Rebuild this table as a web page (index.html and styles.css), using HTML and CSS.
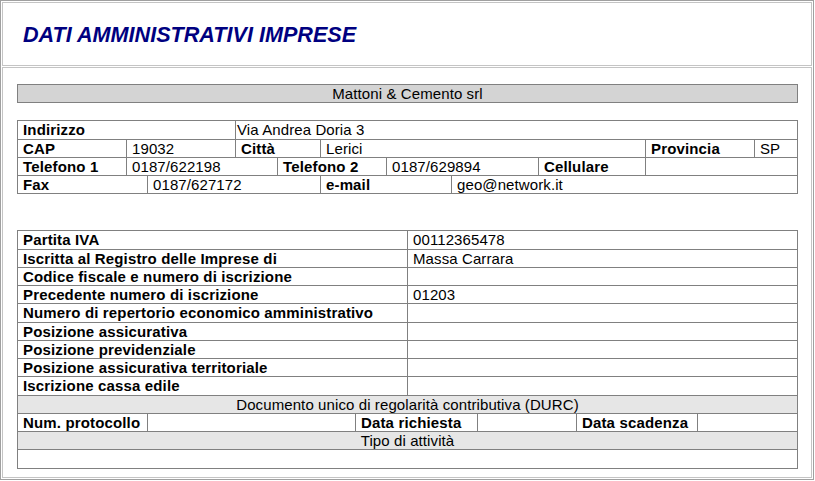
FILE: index.html
```html
<!DOCTYPE html>
<html lang="it">
<head>
<meta charset="utf-8">
<title>Dati amministrativi imprese</title>
<link rel="stylesheet" href="styles.css">
</head>
<body>
<div class="frame">
  <div class="pane pane-top">
    <h1 class="title">DATI AMMINISTRATIVI IMPRESE</h1>
  </div>
  <div class="pane pane-main">
    <div class="company">Mattoni &amp; Cemento srl</div>

    <div class="grid addr">
      <div class="row a1">
        <div class="c lbl">Indirizzo</div>
        <div class="c tight">Via Andrea Doria 3</div>
      </div>
      <div class="row a2">
        <div class="c lbl">CAP</div>
        <div class="c">19032</div>
        <div class="c lbl">Città</div>
        <div class="c">Lerici</div>
        <div class="c lbl">Provincia</div>
        <div class="c">SP</div>
      </div>
      <div class="row a3">
        <div class="c lbl">Telefono 1</div>
        <div class="c">0187/622198</div>
        <div class="c lbl">Telefono 2</div>
        <div class="c">0187/629894</div>
        <div class="c lbl">Cellulare</div>
        <div class="c"></div>
      </div>
      <div class="row a4">
        <div class="c lbl">Fax</div>
        <div class="c">0187/627172</div>
        <div class="c lbl">e-mail</div>
        <div class="c">geo@network.it</div>
      </div>
    </div>

    <div class="grid admin">
      <div class="row half"><div class="c lbl">Partita IVA</div><div class="c">00112365478</div></div>
      <div class="row half"><div class="c lbl">Iscritta al Registro delle Imprese di</div><div class="c">Massa Carrara</div></div>
      <div class="row half"><div class="c lbl">Codice fiscale e numero di iscrizione</div><div class="c"></div></div>
      <div class="row half"><div class="c lbl">Precedente numero di iscrizione</div><div class="c">01203</div></div>
      <div class="row half"><div class="c lbl">Numero di repertorio economico amministrativo</div><div class="c"></div></div>
      <div class="row half"><div class="c lbl">Posizione assicurativa</div><div class="c"></div></div>
      <div class="row half"><div class="c lbl">Posizione previdenziale</div><div class="c"></div></div>
      <div class="row half"><div class="c lbl">Posizione assicurativa territoriale</div><div class="c"></div></div>
      <div class="row half"><div class="c lbl">Iscrizione cassa edile</div><div class="c"></div></div>
      <div class="row full"><div class="c band">Documento unico di regolarità contributiva (DURC)</div></div>
      <div class="row durc">
        <div class="c lbl">Num. protocollo</div>
        <div class="c"></div>
        <div class="c lbl">Data richiesta</div>
        <div class="c"></div>
        <div class="c lbl">Data scadenza</div>
        <div class="c"></div>
      </div>
      <div class="row full"><div class="c band">Tipo di attività</div></div>
      <div class="row full"><div class="c">&nbsp;</div></div>
    </div>
  </div>
</div>
</body>
</html>
```

FILE: styles.css
```css
html, body {
  margin: 0;
  padding: 0;
}

body {
  font-family: "Liberation Sans", Arial, sans-serif;
  font-size: 15px;
  line-height: 17.25px;
  letter-spacing: 0.1px;
  color: #000;
  background: #fff;
}

.frame {
  box-sizing: border-box;
  width: 814px;
  height: 480px;
  border: 1px solid #a0a0a0;
  padding: 1px;
  display: flex;
  flex-direction: column;
  gap: 1px;
}

.pane {
  box-sizing: border-box;
  border: 1px solid #c4c4c4;
}

.pane-top {
  flex: none;
  height: 64px;
}

.pane-main {
  flex: 1;
  padding: 16px 13px 0 14px;
}

.title {
  margin: 0;
  padding: 20px 0 0 20px;
  font-size: 21.6px;
  font-weight: bold;
  font-style: italic;
  line-height: 24.5px;
  letter-spacing: 0;
  color: #000080;
}

.company {
  border: 1px solid #808080;
  background: #d4d4d4;
  text-align: center;
}

.grid {
  border-top: 1px solid #808080;
  border-left: 1px solid #808080;
}

.addr {
  margin-top: 17px;
}

.admin {
  margin-top: 36px;
}

.row {
  display: grid;
}

.c {
  border-right: 1px solid #808080;
  border-bottom: 1px solid #808080;
  padding: 0 1px 0 5px;
  white-space: nowrap;
  overflow: hidden;
  min-height: 17.25px;
}

.c.tight {
  padding-left: 1px;
}

.lbl {
  font-weight: bold;
  letter-spacing: 0.15px;
}

.band {
  background: #e6e6e6;
  text-align: center;
  padding: 0;
}

.a1 { grid-template-columns: 218px 562px; }
.a2 { grid-template-columns: 109px 109px 85px 325px 109px 43px; }
.a3 { grid-template-columns: 109px 151px 109px 152px 107px 152px; }
.a4 { grid-template-columns: 130px 173px 131px 346px; }
.half { grid-template-columns: 390px 390px; }
.full { grid-template-columns: 780px; }
.durc { grid-template-columns: 130px 208px 122px 99px 121px 100px; }
```
